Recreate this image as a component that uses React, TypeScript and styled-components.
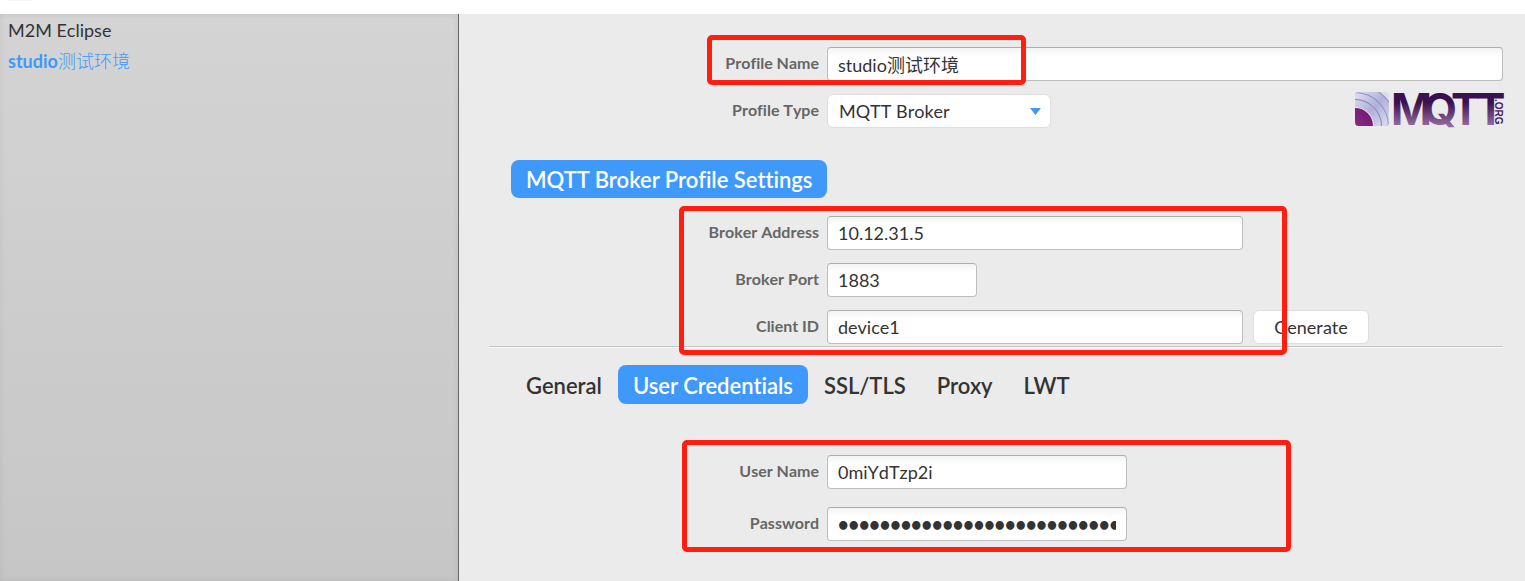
import React from "react";
import styled, { createGlobalStyle, css } from "styled-components";

const blue = "#3f99fb";

const GlobalStyle = createGlobalStyle`
  *, *::before, *::after { box-sizing: border-box; }
  body { margin: 0; background: #ebebeb; }
  body, input, select, button {
    font-family: Lato, "Noto Sans CJK SC", sans-serif;
    font-size: 18px;
    line-height: 24px;
    font-kerning: none;
    font-variant-ligatures: none;
    color: #333;
  }
`;

const Page = styled.div`
  display: flex;
  flex-direction: column;
  min-height: 100vh;
`;

const TopStrip = styled.header`
  height: 14px;
  padding-left: 8px;
  background: #fff;

  &::before {
    content: "";
    display: block;
    width: 24px;
    height: 1px;
    background: #f4f4f4;
  }
`;

const Body = styled.div`
  flex: 1;
  display: flex;
`;

const Sidebar = styled.nav`
  flex: 0 0 459px;
  display: flex;
  flex-direction: column;
  gap: 7px;
  padding: 4px 8px;
  border-right: 1px solid #666;
  background: linear-gradient(#d4d4d4, #c6c6c6);
  box-shadow: inset 0 0 6px rgba(0, 0, 0, 0.08);
`;

const ProfileLink = styled.a<{ $active?: boolean }>`
  text-decoration: none;
  color: ${(p) => (p.$active ? blue : "#333")};
`;

const Cjk = styled.span`
  font-weight: 300;
`;

const Strong = styled.strong`
  font-weight: 700;
`;

const Main = styled.main`
  flex: 1;
  min-width: 0;
  padding: 33px 22px 24px 30px;
`;

const FieldGroup = styled.section<{ $gap: number; $top?: number }>`
  position: relative;
  display: flex;
  flex-direction: column;
  gap: ${(p) => p.$gap}px;
  margin-top: ${(p) => p.$top ?? 0}px;
`;

const Field = styled.div`
  display: grid;
  grid-template-columns: 330px minmax(0, 1fr);
  column-gap: 8px;
`;

const Label = styled.label`
  padding-top: 4px;
  text-align: right;
  font-size: 16px;
  font-weight: 700;
  color: #666;
`;

const Controls = styled.div`
  display: flex;
  align-items: center;
  gap: 10px;
`;

const TextInput = styled.input<{ $width?: number }>`
  width: ${(p) => (p.$width ? `${p.$width}px` : "100%")};
  height: 34px;
  padding: 0 10px;
  border: 1px solid #bdbdbd;
  border-top-color: #adadad;
  border-radius: 4px;
  outline: none;
  background: linear-gradient(#f3f3f3, #fff 8px);

  &[type="password"] {
    font-weight: 900;
  }
`;

const raised = css`
  height: 34px;
  border: 1px solid #dedede;
  border-radius: 6px;
  background: #fff;
`;

const SelectBox = styled.div`
  display: grid;
  align-items: center;
  width: 224px;

  > * { grid-area: 1 / 1; }
`;

const Select = styled.select`
  ${raised}
  width: 100%;
  padding: 0 32px 0 11px;
  appearance: none;
  outline: none;
`;

const Arrow = styled.svg`
  justify-self: end;
  margin-right: 10px;
  pointer-events: none;
`;

const Button = styled.button`
  ${raised}
  width: 116px;
  padding: 0;
`;

const Logo = styled.svg`
  margin-left: auto;
  overflow: visible;
`;

const titleText = css`
  font-size: 22px;
  line-height: 28px;
  font-weight: 600;
  font-kerning: normal;
`;

const Heading = styled.h2`
  ${titleText}
  width: max-content;
  margin: 32px 0 0 22px;
  padding: 6px 15px 4px;
  border-radius: 8px;
  background: ${blue};
  color: #fff;
`;

const Divider = styled.hr`
  height: 2px;
  margin: 2px 0 0;
  border: 0;
  border-top: 1px solid #c4c4c4;
  background: #f8f8f8;
`;

const Tabs = styled.div`
  display: flex;
  gap: 1px;
  margin: 17px 0 0 22px;
`;

const Tab = styled.button<{ $active?: boolean }>`
  ${titleText}
  height: 39px;
  padding: 2px 15px 0;
  border: 0;
  border-radius: 8px;
  background: ${(p) => (p.$active ? blue : "transparent")};
  color: ${(p) => (p.$active ? "#fff" : "#333")};
`;

const Highlight = styled.div<{ $x: number; $y: number; $w: number; $h: number }>`
  position: absolute;
  left: ${(p) => p.$x}px;
  top: ${(p) => p.$y}px;
  width: ${(p) => p.$w}px;
  height: ${(p) => p.$h}px;
  border: 5px solid #ff1e10;
  border-radius: 5px;
  pointer-events: none;
`;

function MqttLogo() {
  return (
    <Logo width="149" height="34" viewBox="0 3 149 34" role="img" aria-label="MQTT.org">
      <defs>
        <linearGradient id="word" gradientUnits="userSpaceOnUse" x1="0" y1="2" x2="0" y2="34">
          <stop offset="0.3" stopColor="#3b1050" />
          <stop offset="1" stopColor="#93699f" />
        </linearGradient>
        <linearGradient id="core" x1="0" y1="1" x2="1" y2="0">
          <stop offset="0.1" stopColor="#b880b8" />
          <stop offset="0.6" stopColor="#83257f" />
          <stop offset="1" stopColor="#6e1570" />
        </linearGradient>
        <linearGradient id="wave" gradientUnits="userSpaceOnUse" x1="1" y1="1" x2="35" y2="35">
          <stop offset="0" stopColor="#e2e2f3" />
          <stop offset="0.5" stopColor="#b0b0d8" />
          <stop offset="1" stopColor="#dedef0" />
        </linearGradient>
        <clipPath id="tile">
          <rect x="1" y="1" width="34" height="34" rx="4" />
        </clipPath>
      </defs>
      <g clipPath="url(#tile)">
        <rect x="1" y="1" width="34" height="34" fill="#dcdcee" />
        <circle cx="1" cy="35" r="42" fill="#8f8fc0" />
        <circle cx="1" cy="35" r="41" fill="url(#wave)" />
        <circle cx="1" cy="35" r="34" fill="#9090c2" />
        <circle cx="1" cy="35" r="33" fill="url(#wave)" />
        <circle cx="1" cy="35" r="27" fill="#8585bb" />
        <circle cx="1" cy="35" r="26" fill="url(#wave)" />
        <circle cx="1" cy="35" r="19" fill="#e6e3f2" />
        <circle cx="1" cy="35" r="18" fill="url(#core)" />
      </g>
      <text
        x="37 69 97 122"
        y="34"
        fill="url(#word)"
        fontFamily="Inter, Arial, sans-serif"
        fontWeight="700"
        fontSize="44"
      >
        MQTT
      </text>
      <text
        transform="translate(141 8) rotate(90)"
        fontFamily="Liberation Sans, Arial, sans-serif"
        fontWeight="700"
        fontSize="10"
        fill="#4a2060"
      >
        .ORG
      </text>
    </Logo>
  );
}

export default function App() {
  return (
    <Page>
      <GlobalStyle />
      <TopStrip />
      <Body>
        <Sidebar aria-label="Profiles">
          <ProfileLink href="#m2m">M2M Eclipse</ProfileLink>
          <ProfileLink href="#studio" $active>
            <Strong>studio</Strong>
            <Cjk>测试环境</Cjk>
          </ProfileLink>
        </Sidebar>
        <Main>
          <FieldGroup $gap={13}>
            <Field>
              <Label htmlFor="name">Profile Name</Label>
              <Controls>
                <TextInput id="name" defaultValue="studio测试环境" />
              </Controls>
            </Field>
            <Field>
              <Label htmlFor="type">Profile Type</Label>
              <Controls>
                <SelectBox>
                  <Select id="type" defaultValue="MQTT Broker">
                    <option>MQTT Broker</option>
                  </Select>
                  <Arrow width="11" height="7" viewBox="0 0 11 7" aria-hidden="true">
                    <path d="M0 0H11L5.5 7Z" fill="#4596ee" />
                  </Arrow>
                </SelectBox>
                <MqttLogo />
              </Controls>
            </Field>
            <Highlight $x={218} $y={-12} $w={319} $h={50} />
          </FieldGroup>

          <Heading>MQTT Broker Profile Settings</Heading>

          <FieldGroup $gap={13} $top={18}>
            <Field>
              <Label htmlFor="address">Broker Address</Label>
              <Controls>
                <TextInput id="address" $width={416} defaultValue="10.12.31.5" />
              </Controls>
            </Field>
            <Field>
              <Label htmlFor="port">Broker Port</Label>
              <Controls>
                <TextInput id="port" $width={150} defaultValue="1883" />
              </Controls>
            </Field>
            <Field>
              <Label htmlFor="client">Client ID</Label>
              <Controls>
                <TextInput id="client" $width={416} defaultValue="device1" />
                <Button type="button">Generate</Button>
              </Controls>
            </Field>
            <Highlight $x={190} $y={-10} $w={608} $h={149} />
          </FieldGroup>

          <Divider />

          <Tabs role="tablist">
            <Tab role="tab">General</Tab>
            <Tab role="tab" aria-selected $active>
              User Credentials
            </Tab>
            <Tab role="tab">SSL/TLS</Tab>
            <Tab role="tab">Proxy</Tab>
            <Tab role="tab">LWT</Tab>
          </Tabs>

          <FieldGroup $gap={18} $top={51}>
            <Field>
              <Label htmlFor="user">User Name</Label>
              <Controls>
                <TextInput id="user" $width={300} defaultValue="0miYdTzp2i" />
              </Controls>
            </Field>
            <Field>
              <Label htmlFor="password">Password</Label>
              <Controls>
                <TextInput
                  id="password"
                  type="password"
                  $width={300}
                  defaultValue="abcdefghijklmnopqrstuvwxyz0"
                />
              </Controls>
            </Field>
            <Highlight $x={193} $y={-15} $w={609} $h={112} />
          </FieldGroup>
        </Main>
      </Body>
    </Page>
  );
}
